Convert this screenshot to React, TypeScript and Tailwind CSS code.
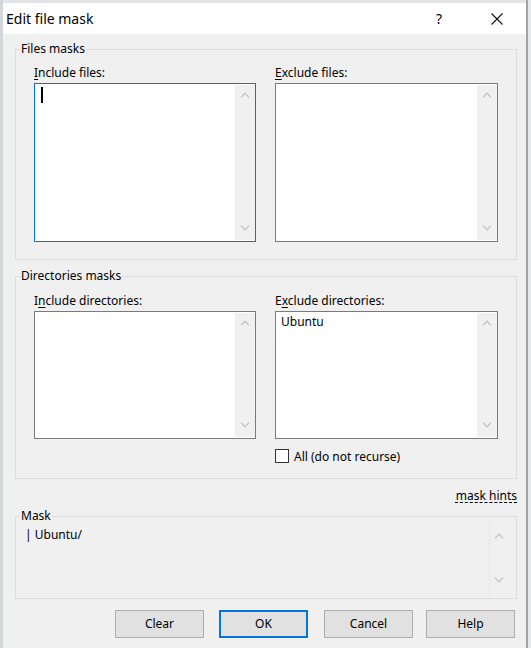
import React from "react";

function Chevron({ up }: { up?: boolean }) {
  return (
    <svg width="10" height="6" viewBox="0 0 10 6" className="block">
      <polyline
        points={up ? "1,5.2 5,1.2 9,5.2" : "1,0.8 5,4.8 9,0.8"}
        fill="none"
        stroke="#c4c4c4"
        strokeWidth="1.3"
      />
    </svg>
  );
}

function ScrollColumn() {
  return (
    <div className="w-[20px] my-[1px] bg-[#f0f0f0] flex flex-col items-center justify-between pt-[7px] pb-[9px]">
      <Chevron up />
      <Chevron />
    </div>
  );
}

function ListBox({
  heightClass,
  focused,
  children,
}: {
  heightClass: string;
  focused?: boolean;
  children?: React.ReactNode;
}) {
  return (
    <div
      className={
        "flex bg-white border " +
        (focused ? "border-[#0078d7] " : "border-[#7a7a7a] ") +
        heightClass
      }
    >
      <div className="flex-1 pl-[5px] pt-[2px] leading-[16px]">{children}</div>
      <ScrollColumn />
    </div>
  );
}

function Label({ before, ul, after }: { before?: string; ul: string; after: string }) {
  return (
    <div className="leading-[16px] mb-[2px]">
      {before}
      <span className="underline underline-offset-[2px]">{ul}</span>
      {after}
    </div>
  );
}

function Group({ title, children, className }: { title: string; children: React.ReactNode; className: string }) {
  return (
    <fieldset className={"ml-[12px] w-[502px] min-w-0 border border-[#dcdcdc] p-0 " + className}>
      <legend className="ml-[4px] px-[1px] leading-[16px]">{title}</legend>
      {children}
    </fieldset>
  );
}

function Button({ label, primary, className }: { label: string; primary?: boolean; className: string }) {
  return (
    <div
      className={
        "h-[28px] w-[89px] flex items-center justify-center bg-[#e1e1e1] " +
        (primary ? "border-2 border-[#0078d7] " : "border border-[#adadad] ") +
        className
      }
    >
      {label}
    </div>
  );
}

export default function App() {
  return (
    <div className="w-[531px] h-[648px] overflow-hidden flex bg-[#e2e4e7] font-['Noto_Sans','Segoe_UI',sans-serif] text-[12px] text-black">
      <div className="w-[3px] bg-[#d3d6da]" />
      <div className="mt-[3px] w-[523px] h-[645px] bg-[#f0f0f0] flex flex-col">
        {/* title bar */}
        <div className="h-[31px] bg-white flex items-center shrink-0">
          <div className="flex-1 pl-[3px] text-[14px] leading-[20px]">Edit file mask</div>
          <div className="w-[14px] text-center text-[14px] leading-[20px]">?</div>
          <svg width="12" height="12" viewBox="0 0 12 12" className="ml-[45px] mr-[23px] block">
            <line x1="0.5" y1="0.5" x2="11.5" y2="11.5" stroke="#111" strokeWidth="1.1" />
            <line x1="11.5" y1="0.5" x2="0.5" y2="11.5" stroke="#111" strokeWidth="1.1" />
          </svg>
        </div>

        {/* file masks */}
        <Group title="Files masks" className="mt-[7px]">
          <div className="grid grid-cols-[222px_223px] gap-x-[19px] pt-[8px] pl-[18px] pr-[18px] pb-[17px]">
            <div className="flex flex-col">
              <Label ul="I" after="nclude files:" />
              <ListBox heightClass="h-[159px]" focused>
                <div className="ml-[1px] mt-[1px] w-[2px] h-[16px] bg-black" />
              </ListBox>
            </div>
            <div className="flex flex-col">
              <Label ul="E" after="xclude files:" />
              <ListBox heightClass="h-[159px]" />
            </div>
          </div>
        </Group>

        {/* directory masks */}
        <Group title="Directories masks" className="mt-[8px]">
          <div className="grid grid-cols-[222px_223px] gap-x-[19px] items-start pt-[9px] pl-[18px] pr-[18px] pb-[13px]">
            <div className="flex flex-col">
              <Label before="I" ul="n" after="clude directories:" />
              <ListBox heightClass="h-[128px]" />
            </div>
            <div className="flex flex-col">
              <Label before="E" ul="x" after="clude directories:" />
              <ListBox heightClass="h-[128px]">Ubuntu</ListBox>
              <div className="flex items-start mt-[10px]">
                <div className="w-[14px] h-[14px] bg-white border border-[#333333]" />
                <span className="ml-[5px] leading-[16px]">All (do not recurse)</span>
              </div>
            </div>
          </div>
        </Group>

        <div className="ml-[12px] w-[502px] mt-[9px] flex justify-end leading-[16px]">
          <span className="underline decoration-dashed underline-offset-[2px]">mask hints</span>
        </div>

        {/* resulting mask */}
        <Group title="Mask" className="mt-[4px]">
          <div className="h-[74px] flex">
            <div className="flex-1 pl-[9px] pt-[3px] leading-[16px]">| Ubuntu/</div>
            <div className="w-[19px] mr-[8px] mt-[1px] mb-[1px] border-l border-[#e6e6e6] flex flex-col items-center justify-between pt-[8px] pb-[14px]">
              <Chevron up />
              <Chevron />
            </div>
          </div>
        </Group>

        <div className="flex mt-[11px] pl-[112px]">
          <Button label="Clear" className="" />
          <Button label="OK" primary className="ml-[15px]" />
          <Button label="Cancel" className="ml-[16px]" />
          <Button label="Help" className="ml-[13px]" />
        </div>
      </div>
      <div className="w-[2px] bg-[#a3a3a3]" />
      <div className="flex-1 bg-[#e6e8eb]" />
    </div>
  );
}
